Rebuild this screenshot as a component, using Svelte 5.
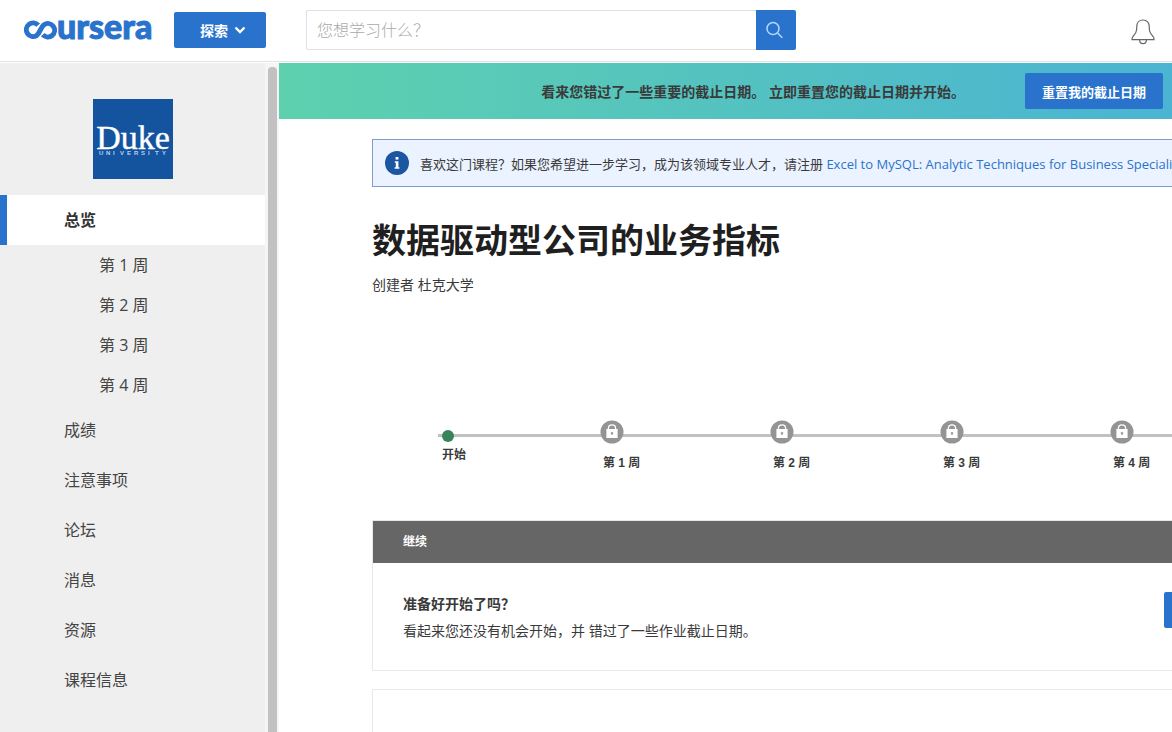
<script lang="ts">
  interface NavItem {
    label: string
    active?: boolean
    weeks?: string[]
  }

  const weeks = ['第 1 周', '第 2 周', '第 3 周', '第 4 周']

  const navItems: NavItem[] = [
    { label: '总览', active: true, weeks },
    { label: '成绩' },
    { label: '注意事项' },
    { label: '论坛' },
    { label: '消息' },
    { label: '资源' },
    { label: '课程信息' }
  ]

  let query = $state('')
</script>

<div class="page">
  <header class="topbar">
    <a class="logo" href="/" aria-label="coursera">
      <svg width="136" height="48" viewBox="0 0 136 48">
        <path
          d="M16.2 19.2 A6.8 6.8 0 1 0 14.6 29.6 C18 27 18.6 21.4 22 18.8 A6.7 6.7 0 1 1 20.8 28.6"
          fill="none"
          stroke="#2a73cc"
          stroke-width="5"
        />
        <text x="35" y="33">ursera</text>
      </svg>
    </a>
    <button class="btn explore">
      探索
      <svg width="12" height="8" viewBox="0 0 12 8">
        <path d="M1.5 1.5 L6 6 L10.5 1.5" fill="none" stroke="#fff" stroke-width="2.4" />
      </svg>
    </button>
    <form class="search" onsubmit={(e) => e.preventDefault()}>
      <input type="text" aria-label="搜索" placeholder="您想学习什么？" bind:value={query} />
      <button aria-label="搜索">
        <svg width="18" height="18" viewBox="0 0 18 18" fill="none" stroke="#b4d8ff" stroke-width="1.5">
          <circle cx="7" cy="7.5" r="6" />
          <path d="M11.5 12 L16.3 16.8" />
        </svg>
      </button>
    </form>
    <button class="bell" aria-label="通知">
      <svg width="24" height="26" viewBox="0 0 24 26" fill="none" stroke="#666" stroke-width="1.2">
        <path
          d="M12 1 C8 1 5.8 4 5.8 7.5 C5.8 13 4.5 14.5 2.2 17.2 C1 18.6 1 20.6 1 20.6 H23 C23 20.6 23 18.6 21.8 17.2 C19.5 14.5 18.2 13 18.2 7.5 C18.2 4 16 1 12 1 Z"
        />
        <path d="M8.6 20.8 C8.6 26 15.4 26 15.4 20.8" />
      </svg>
    </button>
  </header>

  <div class="body">
    <aside class="sidebar">
      <svg class="school" width="80" height="80" viewBox="0 0 80 80" role="img" aria-label="Duke University">
        <rect width="80" height="80" fill="#14549f" />
        <text class="duke" x="40" y="50" text-anchor="middle">Duke</text>
        <text class="university" x="6" y="56">
          {#each 'UNIVERSITY' as letter, i}
            <tspan x={6 + i * 7}>{letter}</tspan>
          {/each}
        </text>
      </svg>
      <nav>
        <ul>
          {#each navItems as item}
            <li>
              <a class="nav-link" class:active={item.active} href="#{item.label}">{item.label}</a>
              {#if item.weeks}
                <ul>
                  {#each item.weeks as week}
                    <li><a class="week-link" href="#{week}">{week}</a></li>
                  {/each}
                </ul>
              {/if}
            </li>
          {/each}
        </ul>
      </nav>
    </aside>
    <div class="scrollbar"><div class="thumb"></div></div>

    <main>
      <div class="banner">
        <p>看来您错过了一些重要的截止日期。 立即重置您的截止日期并开始。</p>
        <button class="btn reset">重置我的截止日期</button>
      </div>

      <div class="content">
        <div class="notice">
          <svg width="24" height="24" viewBox="0 0 24 24">
            <circle cx="12" cy="12" r="12" fill="#1c55a0" />
            <rect x="10.6" y="6" width="2.8" height="2.6" fill="#fff" />
            <path d="M9.8 10.2 H13.4 V16.2 H14.4 V17.8 H9.6 V16.2 H10.8 V11.8 H9.8 Z" fill="#fff" />
          </svg>
          <p>
            喜欢这门课程？如果您希望进一步学习，成为该领域专业人才，请注册
            <a href="#specialization">Excel to MySQL: Analytic Techniques for Business Specialization</a>
          </p>
        </div>

        <h1>数据驱动型公司的业务指标</h1>
        <p class="creator">创建者 杜克大学</p>

        <ol class="timeline">
          <li class="start">
            <span class="dot"></span>
            <span class="label">开始</span>
          </li>
          {#each weeks as week}
            <li class="step">
              <svg width="24" height="24" viewBox="0 0 24 24">
                <circle cx="12" cy="12" r="11.5" fill="#949494" />
                <path d="M8.4 10 V8.4 C8.4 3.8 15.6 3.8 15.6 8.4 V10" fill="none" stroke="#fff" stroke-width="1.3" />
                <rect x="6.4" y="9" width="11.2" height="9" fill="#fff" />
                <path d="M12 12 V15 M10.8 13.2 H13.2" stroke="#949494" stroke-width="1.2" />
              </svg>
              <span class="label">{week}</span>
            </li>
          {/each}
        </ol>

        <section class="card">
          <h2>继续</h2>
          <div class="card-body">
            <div>
              <h3>准备好开始了吗？</h3>
              <p>看起来您还没有机会开始，并 错过了一些作业截止日期。</p>
            </div>
            <button class="btn begin">开始</button>
          </div>
        </section>

        <section class="card next"></section>
      </div>
    </main>
  </div>
</div>

<style>
  :global(body) {
    margin: 0;
    overflow: hidden;
  }

  .page {
    height: 100vh;
    display: flex;
    flex-direction: column;
    overflow: hidden;
    background: #fff;
    color: #3a3a3a;
    font-family: 'Open Sans', 'Noto Sans CJK SC', sans-serif;
    font-size: 14px;
  }

  p, h1, h2, h3, ul, ol {
    margin: 0;
    padding: 0;
  }

  ul, ol {
    list-style: none;
  }

  svg {
    display: block;
    flex-shrink: 0;
  }

  a {
    color: #2a73cc;
    text-decoration: none;
  }

  button, input {
    font-family: inherit;
    margin: 0;
    padding: 0;
    border: 0;
  }

  .topbar {
    flex-shrink: 0;
    display: flex;
    align-items: center;
    height: 60px;
    padding: 0 17px 1px 22px;
    border-bottom: 1px solid #e1e1e1;
  }

  .logo text {
    font-family: Lato, sans-serif;
    font-size: 34px;
    font-weight: 900;
    fill: #2a73cc;
    stroke: #2a73cc;
    stroke-width: 1px;
  }

  .btn {
    flex-shrink: 0;
    height: 36px;
    border-radius: 2px;
    background: #2a73cc;
    color: #fff;
    font-size: 13px;
    font-weight: 700;
  }

  .explore {
    display: flex;
    align-items: center;
    gap: 6px;
    width: 92px;
    margin-left: 16px;
    padding-left: 26px;
    font-size: 14px;
  }

  .search {
    display: flex;
    width: 490px;
    margin-left: 40px;
  }

  .search input {
    flex: 1;
    box-sizing: border-box;
    height: 40px;
    padding: 0 10px;
    border: 1px solid #e5e0e0;
    border-right: 0;
    border-radius: 2px 0 0 2px;
    font-size: 16px;
    outline: none;
  }

  .search input::placeholder {
    color: #aaa;
    font-weight: 300;
  }

  .search button {
    display: flex;
    align-items: center;
    padding-left: 10px;
    width: 40px;
    border-radius: 0 2px 2px 0;
    background: #2a73cc;
  }

  .bell {
    margin-left: auto;
    padding-top: 4px;
    background: none;
  }

  .body {
    flex: 1;
    display: flex;
    min-height: 0;
    padding-top: 1px;
  }

  .sidebar {
    flex: 0 0 265px;
    overflow: hidden;
    background: #efefef;
  }

  .school {
    margin: 36px auto 16px;
  }

  .duke {
    font-family: 'Liberation Serif', serif;
    font-size: 34px;
    fill: #fff;
    stroke: #fff;
    stroke-width: 0.4px;
  }

  .university {
    font-family: 'Liberation Sans', sans-serif;
    font-size: 6px;
    font-weight: 700;
    fill: #b8d2ee;
  }

  .nav-link,
  .week-link {
    display: block;
    color: #444;
    font-size: 16px;
  }

  .nav-link {
    padding-left: 64px;
    line-height: 50px;
  }

  .nav-link.active {
    padding-left: 57px;
    border-left: 7px solid #2a73cc;
    background: #fff;
    color: #333;
    font-weight: 600;
  }

  .week-link {
    padding-left: 99px;
    line-height: 40px;
  }

  .scrollbar {
    flex: 0 0 14px;
    box-sizing: border-box;
    display: flex;
    padding: 4px 2px 0 3px;
    background: #f5f5f5;
  }

  .thumb {
    flex: 1;
    border-radius: 4px 4px 0 0;
    background: #c1c1c1;
  }

  main {
    flex: 1;
    min-width: 0;
    overflow: hidden;
  }

  .banner {
    display: flex;
    align-items: center;
    justify-content: flex-end;
    gap: 60px;
    height: 56px;
    padding-right: 9px;
    background: linear-gradient(90deg, #5dd1ae, #4bb4d2);
    font-weight: 700;
  }

  .reset {
    padding: 0 17px;
  }

  .content {
    width: 910px;
    padding: 20px 0 0 93px;
  }

  .notice {
    display: flex;
    align-items: center;
    gap: 11px;
    height: 46px;
    padding-left: 12px;
    border: 1px solid #7f9ccb;
    background: #eaf3ff;
    font-size: 13px;
    white-space: nowrap;
    overflow: hidden;
  }

  h1 {
    margin-top: 28px;
    color: #1f1f1f;
    font-size: 34px;
    font-weight: 600;
    line-height: 50px;
  }

  .creator {
    margin-top: 10px;
    line-height: 20px;
  }

  .timeline {
    display: flex;
    height: 60px;
    margin: 125px 0 40px 66px;
    background: linear-gradient(#c1c1c1, #c1c1c1) 0 14px / 100% 3px no-repeat;
    font-family: 'Liberation Sans', 'Noto Sans CJK SC', sans-serif;
    font-size: 12px;
  }

  .timeline .label {
    display: block;
    font-weight: 700;
    line-height: 18px;
  }

  .start {
    width: 154px;
    padding: 10px 0 0 4px;
  }

  .dot {
    display: block;
    width: 12px;
    height: 12px;
    margin-bottom: 4px;
    border-radius: 50%;
    background: #35845a;
  }

  .step {
    width: 170px;
  }

  .step svg {
    margin: 0 0 10px 4px;
  }

  .step .label {
    padding-left: 7px;
  }

  .card {
    border: 1px solid #e8e8e8;
  }

  .card h2 {
    padding-left: 30px;
    background: #666;
    color: #fff;
    font-size: 12px;
    font-weight: 600;
    line-height: 42px;
  }

  .card-body {
    display: flex;
    align-items: flex-start;
    justify-content: space-between;
    padding: 29px 29px 24px 30px;
  }

  .card h3 {
    font-size: 14px;
    font-weight: 600;
    line-height: 24px;
  }

  .card p {
    line-height: 30px;
  }

  .begin {
    width: 88px;
  }

  .next {
    height: 120px;
    margin-top: 18px;
  }
</style>
